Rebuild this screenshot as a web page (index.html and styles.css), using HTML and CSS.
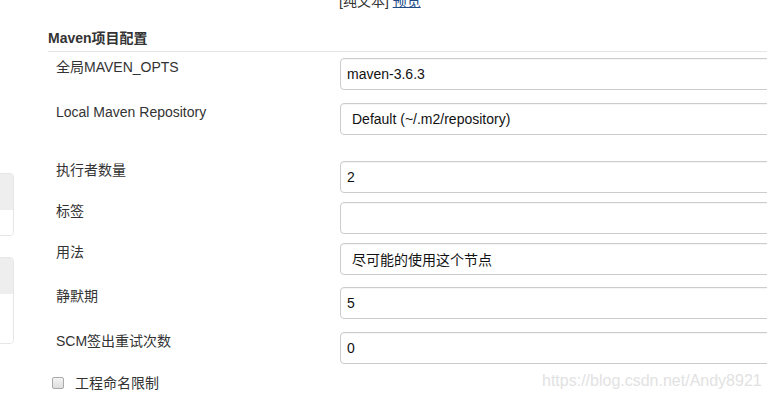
FILE: index.html
```html
<!DOCTYPE html>
<html lang="zh-CN">
<head>
    <meta charset="UTF-8">
    <meta name="viewport" content="width=device-width, initial-scale=1.0">
    <title>Maven项目配置</title>
    <link rel="stylesheet" href="styles.css">
</head>
<body>
    <div class="page">
        <!-- Side panel (cut off at the left edge) -->
        <div class="side-panel">
            <div class="side-box side-box-first">
                <div class="side-box-head"></div>
                <div class="side-box-body"></div>
            </div>
            <div class="side-box side-box-second">
                <div class="side-box-head"></div>
                <div class="side-box-body tall"></div>
            </div>
        </div>

        <div class="main">
            <div class="format-links">[纯文本] <a href="#">预览</a></div>

            <div class="section-title">Maven项目配置</div>

            <div class="form-row row-opts">
                <label class="row-label">全局MAVEN_OPTS</label>
                <input class="field" type="text" value="maven-3.6.3">
            </div>
            <div class="form-row row-repo">
                <label class="row-label">Local Maven Repository</label>
                <div class="field select">Default (~/.m2/repository)</div>
            </div>
            <div class="form-row row-executors">
                <label class="row-label">执行者数量</label>
                <input class="field" type="text" value="2">
            </div>
            <div class="form-row row-tight">
                <label class="row-label">标签</label>
                <input class="field" type="text" value="">
            </div>
            <div class="form-row row-tight">
                <label class="row-label">用法</label>
                <div class="field select">尽可能的使用这个节点</div>
            </div>
            <div class="form-row row-quiet">
                <label class="row-label">静默期</label>
                <input class="field" type="text" value="5">
            </div>
            <div class="form-row row-scm">
                <label class="row-label">SCM签出重试次数</label>
                <input class="field" type="text" value="0">
            </div>

            <div class="check-row">
                <span class="checkbox"></span>
                <span class="check-label">工程命名限制</span>
            </div>
        </div>
    </div>

    <div class="watermark">https://blog.csdn.net/Andy8921</div>
</body>
</html>
```

FILE: styles.css
```css
/* General Reset */
body, html {
    margin: 0;
    padding: 0;
    height: 100%;
    overflow: hidden;
    background: #fff;
    font-family: "Liberation Sans", Arial, "Noto Sans CJK SC", sans-serif;
    font-size: 14px;
    color: #333;
}

.page {
    display: flex;
    width: 100%;
}

/* Side panel boxes at the left edge */
.side-panel {
    width: 14px;
    flex-shrink: 0;
}

.side-box {
    width: 20px;
    margin-left: -6px;
    border: 1px solid #e6e6e6;
    border-radius: 4px;
    box-sizing: border-box;
    overflow: hidden;
}

.side-box-first {
    margin-top: 173px;
}

.side-box-second {
    margin-top: 21px;
}

.side-box-head {
    height: 36px;
    background: #eeeeee;
}

.side-box-body {
    height: 25px;
    background: #fff;
}

.side-box-body.tall {
    height: 49px;
}

/* Main form */
.main {
    flex: 1;
    padding-left: 34px;
    min-width: 0;
}

.format-links {
    margin-top: -8px;
    padding-left: 291px;
    line-height: 18px;
    font-size: 14px;
}

.format-links a {
    color: #204a87;
}

.section-title {
    margin-top: 19px;
    font-weight: bold;
    line-height: 18px;
    padding-bottom: 4px;
    border-bottom: 1px solid #e5e5e5;
    color: #333;
}

.form-row {
    display: flex;
    align-items: flex-start;
    margin-top: 13px;
}

.row-opts {
    margin-top: 6px;
}

.row-executors {
    margin-top: 26px;
}

.row-tight {
    margin-top: 9px;
}

.row-quiet {
    margin-top: 12px;
}

.row-label {
    width: 292px;
    flex-shrink: 0;
    padding-left: 8px;
    box-sizing: border-box;
    line-height: 18px;
    color: #333;
}

.field {
    width: 460px;
    height: 32px;
    flex-shrink: 0;
    box-sizing: border-box;
    border: 1px solid #cccccc;
    border-radius: 4px;
    padding: 0 6px;
    font-family: inherit;
    font-size: 14px;
    color: #111;
    background: #fff;
    box-shadow: inset 0 1px 1px rgba(0, 0, 0, 0.04);
    outline: none;
}

.select {
    display: flex;
    align-items: center;
    padding-left: 11px;
}

/* Checkbox row */
.check-row {
    display: flex;
    align-items: center;
    margin-top: 12px;
    padding-left: 4px;
    height: 14px;
}

.checkbox {
    width: 12px;
    height: 12px;
    box-sizing: border-box;
    border: 1px solid #a9a9a9;
    border-radius: 2px;
    background: linear-gradient(#f4f4f4, #dedede);
}

.check-label {
    margin-left: 11px;
    line-height: 18px;
    color: #333;
}

/* Watermark over the page */
.watermark {
    position: absolute;
    left: 542px;
    top: 370px;
    font-size: 16px;
    line-height: 22px;
    color: #e2e2e2;
    white-space: nowrap;
}
```
